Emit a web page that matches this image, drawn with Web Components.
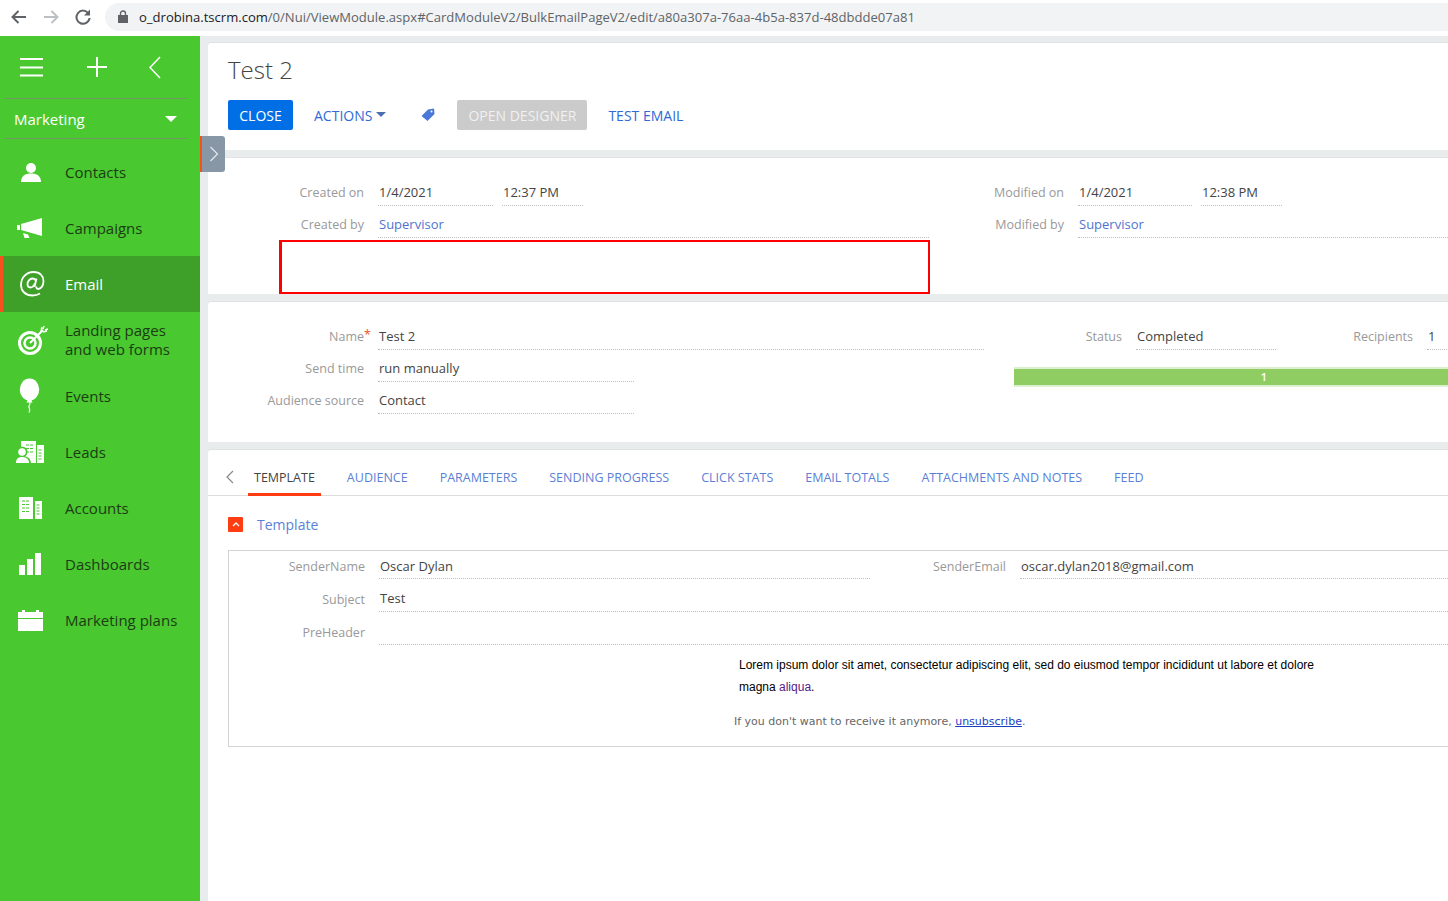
<!DOCTYPE html>
<html>
<head>
<meta charset="utf-8">
<title>Test 2</title>
<style>
  html, body { margin: 0; padding: 0; height: 100%; overflow: hidden; background: #e9eced; }
  body { font-family: "Open Sans", sans-serif; }
</style>
</head>
<body>
<x-page>
  <x-browser-bar slot="bar">o_drobina.tscrm.com/0/Nui/ViewModule.aspx#CardModuleV2/BulkEmailPageV2/edit/a80a307a-76aa-4b5a-837d-48dbdde07a81</x-browser-bar>

  <x-side-bar slot="side">
    <x-nav-item>
      <svg slot="icon" viewBox="0 0 40 40"><circle cx="21" cy="16" r="5"/><path d="M11 30c0-6 4-8.500 10-8.500s10 2.500 10 8.500z"/></svg>
      Contacts
    </x-nav-item>
    <x-nav-item>
      <svg slot="icon" viewBox="0 0 40 40"><path d="M7 17h3v5H7zM11 16l21-6v18l-21-6zM13 25l5 1.500 1.500 3.500h-5z"/></svg>
      Campaigns
    </x-nav-item>
    <x-nav-item active>
      <svg slot="icon" viewBox="0 0 40 40"><g fill="none" stroke="#fff" stroke-width="1.800"><path d="M30 29.500c-2.500 1.500-5 2-7.500 2-7 0-11.500-4.500-11.500-10.500 0-7.500 5.500-13 12.500-13 6.500 0 10 4 10 9 0 5-2.800 8-5.300 8-1.500 0-2-1-1.700-2.500"/><path d="M26.500 14.500l-2 8.500M26 17c-.8-1.800-2-2.500-3.500-2.500-3 0-5 3-5 5.800 0 2 1.100 3.200 2.800 3.200 2.200 0 3.700-2 4.500-4"/></g></svg>
      Email
    </x-nav-item>
    <x-nav-item>
      <svg slot="icon" viewBox="0 0 40 40"><g fill="none" stroke="#fff"><circle cx="20" cy="23" r="10.500" stroke-width="3"/><circle cx="20" cy="23" r="5.500" stroke-width="2.500"/><path d="M20 23L33 10" stroke-width="2"/><path d="M31 11l1-4M33 12l4-1M33 9l1-3M35 10l3-1" stroke-width="1.400"/></g></svg>
      <span>Landing pages<br>and web forms</span>
    </x-nav-item>
    <x-nav-item>
      <svg slot="icon" viewBox="0 0 40 40"><ellipse cx="19.500" cy="13.500" rx="9.700" ry="11"/><path d="M17.500 24h4l1 2.500h-6z"/><path d="M19.500 26c2 2-1.500 3.500-.5 5.500s1.500 2 0 5" fill="none" stroke="#fff" stroke-width="1.200"/></svg>
      Events
    </x-nav-item>
    <x-nav-item>
      <svg slot="icon" viewBox="0 0 40 40"><path d="M11 9h15v22H11zM27 13h7v18h-7z"/><path d="M16 13h7M16 16.500h7M16 20h7M28.500 18h4M28.500 21h4M28.500 24h4M28.500 27h4" stroke="#49c82f" stroke-width="1.200" stroke-dasharray="3 1" fill="none"/><circle cx="12" cy="20" r="5.500" fill="#49c82f"/><path d="M4 32c0-6 3-8 8-8s9 2 9 8z" fill="#49c82f"/><circle cx="12" cy="20" r="3.800"/><path d="M6 31c0-4 2-6 6-6s7 2 7 6z"/></svg>
      Leads
    </x-nav-item>
    <x-nav-item>
      <svg slot="icon" viewBox="0 0 40 40"><path d="M9 9h14v22H9zM25 13h7v18h-7z"/><path d="M12 13h8M12 16.500h8M12 20h8M12 23.500h8M26.500 17h4M26.500 20h4M26.500 23h4M26.500 26h4" stroke="#49c82f" stroke-width="1.200" stroke-dasharray="3 1" fill="none"/></svg>
      Accounts
    </x-nav-item>
    <x-nav-item>
      <svg slot="icon" viewBox="0 0 40 40"><path d="M9 21h6v10H9zM17 15h6v16h-6zM25 9h6v22h-6z"/></svg>
      Dashboards
    </x-nav-item>
    <x-nav-item>
      <svg slot="icon" viewBox="0 0 40 40"><path d="M8 12h4v-2h3v2h11v-2h3v2h4v6H8zM8 19h25v12H8z"/></svg>
      Marketing plans
    </x-nav-item>
  </x-side-bar>

  <x-card slot="main" style="--pad:10px 0 20px 20px">
    <x-title>Test 2</x-title>
    <x-toolbar>
      <x-btn kind="primary" style="width:65px">CLOSE</x-btn>
      <x-btn kind="link" style="margin-left:21px">ACTIONS<svg viewBox="0 0 10 5" width="10" height="5" style="margin-left:4px;margin-bottom:2px"><path d="M0 0h10L5 5z" fill="#4a6fb0"/></svg></x-btn>
      <svg style="margin-left:35px" viewBox="0 0 14 14" width="14" height="14"><path d="M0.500 8L7 1.500 13 0.500 13.500 6 6.500 13z" fill="#4a78d8"/><circle cx="10.500" cy="3.500" r="1" fill="#fff"/></svg>
      <x-btn kind="disabled" style="width:130px;margin-left:22px">OPEN DESIGNER</x-btn>
      <x-btn kind="link" style="margin-left:21px">TEST EMAIL</x-btn>
    </x-toolbar>
  </x-card>

  <x-card slot="main" style="--pad:18px 0 0 0;height:136px;margin-top:8px">
    <x-two-col style="--left:722px">
      <x-rows>
        <x-row>
          <x-field label="Created on" style="--lw:156px;--vw:115px">1/4/2021</x-field>
          <x-field style="--lw:0;--gap:0px;--vw:81px;margin-left:9px">12:37 PM</x-field>
        </x-row>
        <x-field label="Created by" link style="--lw:156px;--vw:551px">Supervisor</x-field>
      </x-rows>
      <x-rows>
        <x-row>
          <x-field label="Modified on" style="--lw:134px;--vw:114px">1/4/2021</x-field>
          <x-field style="--lw:0;--gap:0px;--vw:81px;margin-left:9px">12:38 PM</x-field>
        </x-row>
        <x-field label="Modified by" link style="--lw:134px;--vw:1fr">Supervisor</x-field>
      </x-rows>
    </x-two-col>
    <x-highlight></x-highlight>
  </x-card>

  <x-card slot="main" style="--pad:18px 0 0 0;height:140px;margin-top:8px">
    <x-two-col style="--left:776px">
      <x-rows>
        <x-field label="Name" required style="--lw:156px;--vw:606px">Test 2</x-field>
        <x-field label="Send time" style="--lw:156px;--vw:256px">run manually</x-field>
        <x-field label="Audience source" style="--lw:156px;--vw:256px">Contact</x-field>
      </x-rows>
      <div>
        <x-row>
          <x-field label="Status" style="--lw:138px;--vw:140px">Completed</x-field>
          <x-field label="Recipients" style="--lw:137px;--vw:40px">1</x-field>
        </x-row>
        <x-progress style="margin:17px 0 0 30px">1</x-progress>
      </div>
    </x-two-col>
  </x-card>

  <x-card slot="main" style="--pad:0;flex:1;margin-top:8px">
    <x-tabs>
      <x-tab active>TEMPLATE</x-tab>
      <x-tab>AUDIENCE</x-tab>
      <x-tab>PARAMETERS</x-tab>
      <x-tab>SENDING PROGRESS</x-tab>
      <x-tab>CLICK STATS</x-tab>
      <x-tab>EMAIL TOTALS</x-tab>
      <x-tab>ATTACHMENTS AND NOTES</x-tab>
      <x-tab>FEED</x-tab>
    </x-tabs>
    <x-group caption="Template">
      <x-two-col style="--left:641px">
        <x-field label="SenderName" style="--lw:136px;--gap:14px;--vw:491px;--h:27px">Oscar Dylan</x-field>
        <x-field label="SenderEmail" style="--lw:136px;--gap:14px;--vw:1fr;--h:27px">oscar.dylan2018@gmail.com</x-field>
      </x-two-col>
      <x-rows style="--row-gap:4px;margin-top:4px">
        <x-field label="Subject" style="--lw:136px;--gap:14px;--vw:1fr;--h:28px">Test</x-field>
        <x-field label="PreHeader" style="--lw:136px;--gap:14px;--vw:1fr;--h:28px"></x-field>
      </x-rows>
      <x-mail-body></x-mail-body>
    </x-group>
  </x-card>
</x-page>

<script>
function define(tag, html, init) {
  customElements.define(tag, class extends HTMLElement {
    constructor() {
      super();
      this.attachShadow({mode: 'open'}).innerHTML = html;
    }
    connectedCallback() {
      if (init) init(this);
    }
  });
}

define('x-page', `
  <style>
    :host { display: flex; flex-direction: column; width: 1448px; height: 901px; overflow: hidden; }
    .body { flex: 1; display: flex; min-height: 0; position: relative; }
    .main { flex: 1; min-width: 0; display: flex; flex-direction: column; padding: 7px 0 0 8px; }
    .toggle { position: absolute; left: 0; top: 100px; left: 200px; width: 25px; height: 36px; box-sizing: border-box;
      background: #8797a6; border-left: 2px solid #f4511e; border-radius: 0 3px 3px 0; display: flex; align-items: center; justify-content: center; }
  </style>
  <slot name="bar"></slot>
  <div class="body">
    <slot name="side"></slot>
    <div class="main"><slot name="main"></slot></div>
    <div class="toggle"><svg width="10" height="16" viewBox="0 0 10 16"><path d="M1.500 1l7 7-7 7" fill="none" stroke="#e4e8ec" stroke-width="1.200"/></svg></div>
  </div>
`);

define('x-browser-bar', `
  <style>
    :host { display: flex; align-items: center; height: 36px; box-sizing: border-box; background: #fff; flex: none; padding-bottom: 3px; }
    .nav { display: flex; align-items: center; width: 105px; flex: none; }
    .nav svg { display: block; margin-left: 10px; }
    .url { flex: 1; height: 28px; margin-top: 0; background: #f1f3f4; border-radius: 14px 0 0 14px; display: flex; align-items: center;
      font: 13.050px "Open Sans", sans-serif; color: #5f6368; white-space: nowrap; overflow: hidden; }
    .url svg { margin: 0 11px 0 13px; flex: none; }
    b { font-weight: 400; color: #202124; }
  </style>
  <div class="nav">
    <svg width="18" height="18" viewBox="0 0 18 18"><path d="M16 9H3M8.500 3L2.500 9l6 6" fill="none" stroke="#5f6368" stroke-width="2"/></svg>
    <svg style="margin-left:14px" width="18" height="18" viewBox="0 0 18 18"><path d="M2 9h13M9.500 3l6 6-6 6" fill="none" stroke="#bcbfc3" stroke-width="2"/></svg>
    <svg style="margin-left:14px" width="18" height="18" viewBox="0 0 18 18"><path d="M14.500 5.500A6.600 6.600 0 1 0 15.600 10" fill="none" stroke="#5f6368" stroke-width="2"/><path d="M16 1.500V7.500H10z" fill="#5f6368"/></svg>
  </div>
  <div class="url">
    <svg width="10" height="13" viewBox="0 0 10 13"><path d="M0 5h10v8H0z" fill="#5f6368"/><path d="M2.500 5V3.500a2.500 2.500 0 0 1 5 0V5" fill="none" stroke="#5f6368" stroke-width="1.400"/></svg>
    <span id="u"></span>
  </div>
`, el => {
  const full = el.textContent.trim();
  const host = 'o_drobina.tscrm.com';
  const u = el.shadowRoot.getElementById('u');
  u.innerHTML = '<b>' + host + '</b>' + full.slice(host.length);
});

define('x-side-bar', `
  <style>
    :host { display: block; width: 200px; flex: none; background: #49c82f; color: #fff; }
    .top { display: flex; align-items: center; height: 63px; box-sizing: border-box; border-bottom: 1px solid #6f9a63; margin: 0 13px 0 4px; position: relative; }
    .top svg { display: block; }
    .sel { display: flex; align-items: center; justify-content: space-between; height: 40px; margin: 0 13px 0 4px; padding: 0 10px;
      box-sizing: border-box; border-bottom: 1px solid #6f9a63; font-size: 15px; }
    .sel i { width: 0; height: 0; border: 6px solid transparent; border-top-color: #fff; border-bottom: 0; }
    nav { display: block; padding-top: 5px; }
  </style>
  <div class="top">
    <svg style="margin-left:16px" width="23" height="20" viewBox="0 0 23 20"><path d="M0 2h23M0 10.500h23M0 18.500h23" stroke="#fff" stroke-width="2"/></svg>
    <svg style="margin-left:44px" width="20" height="20" viewBox="0 0 20 20"><path d="M10 0v20M0 10h20" stroke="#fff" stroke-width="2"/></svg>
    <svg style="margin-left:41px" width="13" height="23" viewBox="0 0 13 23"><path d="M12 1L2 11.500 12 22" fill="none" stroke="#fff" stroke-width="1.500"/></svg>
  </div>
  <div class="sel"><span>Marketing</span><i></i></div>
  <nav><slot></slot></nav>
`);

define('x-nav-item', `
  <style>
    :host { display: flex; align-items: center; height: 56px; position: relative; font-size: 15px; line-height: 19px; color: #1c3d14; box-sizing: border-box; padding-left: 65px; }
    :host([active]) { background: #3ea029; color: #fff; }
    :host([active])::before { content: ""; position: absolute; left: 0; top: 0; bottom: 0; width: 3px; background: #f4511e; }
    .icon { position: absolute; left: 10px; top: 8px; width: 40px; height: 40px; fill: #fff; }
    ::slotted(svg) { width: 40px; height: 40px; display: block; fill: #fff; }
  </style>
  <div class="icon"><slot name="icon"></slot></div>
  <slot></slot>
`);

define('x-card', `
  <style>
    :host { display: block; background: #fff; position: relative; padding: var(--pad, 0); box-sizing: border-box; border-radius: 3px 0 0 0; flex: none; box-shadow: 0 -1px 0 #dfe3e4; }
  </style>
  <slot></slot>
`);

define('x-title', `
  <style>
    :host { display: block; font: 300 24px/34px "Open Sans", sans-serif; color: #444; }
  </style>
  <slot></slot>
`);

define('x-toolbar', `
  <style>
    :host { display: flex; align-items: center; height: 30px; margin-top: 13px; }
  </style>
  <slot></slot>
`);

define('x-btn', `
  <style>
    :host { display: inline-flex; align-items: center; justify-content: center; height: 30px; font-size: 14px; border-radius: 2px; box-sizing: border-box; white-space: nowrap; flex: none; }
    :host([kind=primary]) { background: #006fe6; color: #fff; }
    :host([kind=link]) { color: #2f6ad6; }
    :host([kind=disabled]) { background: #cbcbcb; color: #f1f1f1; }
  </style>
  <slot></slot>
`);

define('x-two-col', `
  <style>
    :host { display: grid; grid-template-columns: var(--left) 1fr; }
  </style>
  <slot></slot>
`);

define('x-rows', `
  <style>
    :host { display: flex; flex-direction: column; gap: var(--row-gap, 2px); }
  </style>
  <slot></slot>
`);

define('x-row', `
  <style>
    :host { display: flex; }
  </style>
  <slot></slot>
`);

define('x-field', `
  <style>
    :host { display: grid; grid-template-columns: var(--lw, 156px) var(--vw, 1fr); column-gap: var(--gap, 14px); height: calc(var(--h, 29px) + 1px); box-sizing: border-box; font-size: 13px; flex: none; }
    .label { text-align: right; color: #999; position: relative; font-size: 12.500px; display: flex; align-items: center; justify-content: flex-end; padding-top: 3px; white-space: nowrap; }
    .req { position: absolute; right: -7px; top: 6px; color: #f4511e; }
    .val { border-bottom: 1px dotted #bdbdbd; color: #444; padding-left: 1px; display: flex; align-items: center; padding-top: 2px; min-width: 0; white-space: nowrap; }
    :host([link]) .val { color: #4f74d0; }
  </style>
  <div class="label"><span id="l"></span></div>
  <div class="val"><slot></slot></div>
`, el => {
  const root = el.shadowRoot;
  root.getElementById('l').textContent = el.getAttribute('label') || '';
  if (el.hasAttribute('required') && !root.querySelector('.req')) {
    const s = document.createElement('span');
    s.className = 'req';
    s.textContent = '*';
    root.querySelector('.label').append(s);
  }
});

define('x-highlight', `
  <style>
    :host { position: absolute; left: 71px; top: 82px; width: 651px; height: 54px; box-sizing: border-box; border: 3px solid #f00; border-width: 2px 2px 2px 3px; }
  </style>
`);

define('x-progress', `
  <style>
    :host { display: block; width: 500px; height: 20px; box-sizing: border-box; background: #8fcd62; border-top: 2px solid #dcefcf; border-bottom: 2px solid #dcefcf;
      text-align: center; color: #fff; font: 600 11px/16px "Open Sans", sans-serif; }
  </style>
  <slot></slot>
`);

define('x-tabs', `
  <style>
    :host { display: flex; align-items: stretch; height: 46px; box-sizing: border-box; border-bottom: 1px solid #ddd; padding-left: 18px; }
    svg { display: block; align-self: center; margin: 9px 14px 0 0; flex: none; }
    .row { display: flex; gap: 20px; }
  </style>
  <svg width="8" height="14" viewBox="0 0 8 14"><path d="M7 1L1 7l6 6" fill="none" stroke="#888" stroke-width="1.200"/></svg>
  <div class="row"><slot></slot></div>
`);

define('x-tab', `
  <style>
    :host { display: flex; align-items: center; padding: 9px 6px 0; height: 46px; box-sizing: border-box; font-size: 12.500px; color: #5b7fd6; white-space: nowrap; position: relative; }
    :host([active]) { color: #444; }
    :host([active])::after { content: ""; position: absolute; left: 0; right: 0; bottom: 0; height: 3px; background: #ff3d12; }
  </style>
  <slot></slot>
`);

define('x-group', `
  <style>
    :host { display: block; padding: 20px 0 0 20px; }
    .head { display: flex; align-items: center; height: 16px; font-size: 14px; color: #5b82d8; }
    .toggle { width: 15px; height: 15px; background: #ff3d12; border-radius: 1px; display: flex; align-items: center; justify-content: center; margin-right: 14px; }
    .box { margin-top: 18px; margin-right: -10px; border: 1px solid #d4d4d4; border-right: 0; height: 197px; box-sizing: border-box; }
  </style>
  <div class="head">
    <div class="toggle"><svg width="8" height="5" viewBox="0 0 8 5"><path d="M1 4l3-3 3 3" fill="none" stroke="#fff" stroke-width="1.300"/></svg></div>
    <span id="c"></span>
  </div>
  <div class="box"><slot></slot></div>
`, el => {
  el.shadowRoot.getElementById('c').textContent = el.getAttribute('caption');
});

define('x-mail-body', `
  <style>
    :host { display: block; padding: 9px 0 0 505px; }
    p { margin: 0; }
    .text { width: 595px; margin-left: 5px; font: 12px/22px "Liberation Sans", Arial, sans-serif; color: #000; }
    .foot { margin-top: 16px; font: 11px/16px "DejaVu Sans", Verdana, sans-serif; color: #666; white-space: nowrap; }
    .text a { color: #551a8b; }
    .foot a { color: #1a3fc4; }
  </style>
  <p class="text">Lorem ipsum dolor sit amet, consectetur adipiscing elit, sed do eiusmod tempor incididunt ut labore et dolore magna <a>aliqua</a>.</p>
  <p class="foot">If you don't want to receive it anymore, <a style="text-decoration:underline">unsubscribe</a>.</p>
`);
</script>
</body>
</html>
